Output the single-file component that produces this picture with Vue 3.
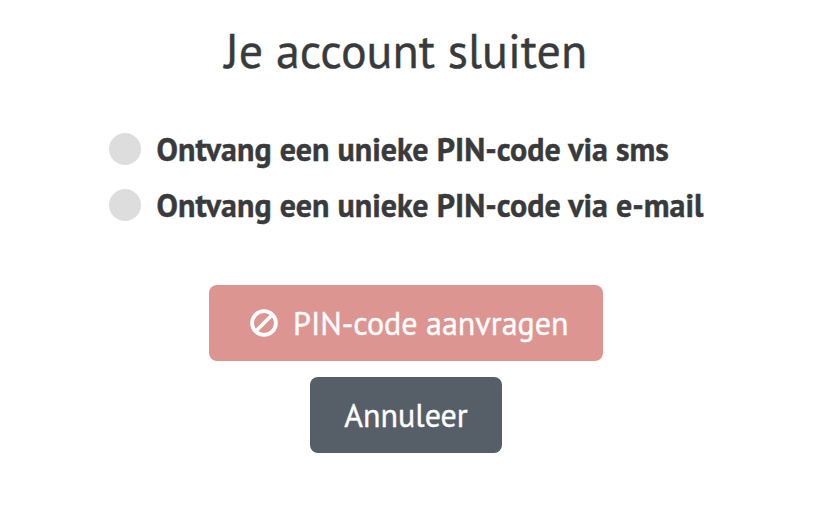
<template>
  <main class="close-account">
    <h1 class="title">Je account sluiten</h1>

    <form class="form" @submit.prevent>
      <div class="options">
        <label v-for="option in options" :key="option.value" class="option">
          <input v-model="method" type="radio" name="method" :value="option.value" class="radio" />
          <span>{{ option.label }}</span>
        </label>
      </div>

      <div class="actions">
        <button type="submit" class="btn btn-primary" :disabled="!method">
          <!-- Shown while no method is chosen -->
          <svg v-if="!method" class="icon" viewBox="0 0 28 28" aria-hidden="true">
            <circle cx="14" cy="14" r="11.9" />
            <path d="M6 22 22 6" />
          </svg>
          <span>PIN-code aanvragen</span>
        </button>
        <button type="button" class="btn btn-secondary" @click="method = ''">Annuleer</button>
      </div>
    </form>
  </main>
</template>

<script setup>
import { ref } from 'vue'

const method = ref('')

const options = [
  { value: 'sms', label: 'Ontvang een unieke PIN-code via sms' },
  { value: 'email', label: 'Ontvang een unieke PIN-code via e-mail' },
]
</script>

<style>
body {
  margin: 0;
  background: #fff;
}
</style>

<style scoped>
.close-account {
  box-sizing: border-box;
  width: 812px;
  height: 514px;
  padding-top: 19px;
  overflow: hidden;
  color: #393a3c;
  font-family: 'PT Sans', 'Open Sans', 'Noto Sans', sans-serif;
  -webkit-text-stroke: 0.4px;
}

.title {
  margin: 0;
  font-size: 48px;
  font-weight: 400;
  line-height: 62px;
  text-align: center;
  white-space: nowrap;
}

.options {
  display: flex;
  flex-direction: column;
  gap: 16px;
  padding: 48px 0 0 109px;
}

.option {
  display: flex;
  align-items: center;
  height: 40px;
  font-size: 32px;
  font-weight: 700;
  white-space: nowrap;
}

.radio {
  appearance: none;
  flex: none;
  width: 32px;
  height: 32px;
  margin: 0 15.5px 0 0;
  border-radius: 50%;
  background: #ddd;
}
.radio:checked {
  border: 9px solid #ddd;
  background: #393a3c;
}

.actions {
  display: flex;
  flex-direction: column;
  align-items: center;
  gap: 16px;
  margin-top: 60px;
}

.btn {
  display: flex;
  align-items: center;
  box-sizing: border-box;
  height: 76px;
  border: 0;
  border-radius: 8px;
  color: #fff;
  font: inherit;
  font-size: 32px;
  white-space: nowrap;
}

.btn-primary {
  width: 394px;
  padding: 0 34px 0 41px;
  background: #dc9591;
}

.btn-secondary {
  justify-content: center;
  width: 192px;
  padding: 0;
  background: #565e67;
}

.icon {
  flex: none;
  width: 28px;
  height: 28px;
  margin-right: 15px;
  fill: none;
  stroke: #fff;
  stroke-width: 3.8;
}
</style>
